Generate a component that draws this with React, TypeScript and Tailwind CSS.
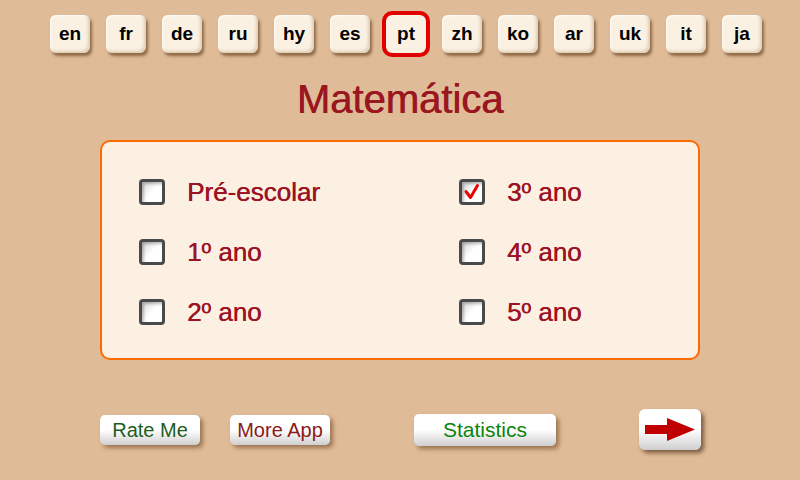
import React from "react";

const langs = ["en", "fr", "de", "ru", "hy", "es", "pt", "zh", "ko", "ar", "uk", "it", "ja"];

const items: { label: string; checked: boolean }[] = [
  { label: "Pré-escolar", checked: false },
  { label: "3º ano", checked: true },
  { label: "1º ano", checked: false },
  { label: "4º ano", checked: false },
  { label: "2º ano", checked: false },
  { label: "5º ano", checked: false },
];

function Checkbox({ checked }: { checked: boolean }) {
  return (
    <div className="w-[26px] h-[26px] rounded-[4px] border-[3px] border-[#4a4a4a] bg-gradient-to-br from-[#d8d8d8] via-white to-white flex items-center justify-center shadow-[inset_2px_2px_3px_rgba(0,0,0,0.25)]">
      {checked && (
        <svg width="18" height="18" viewBox="0 0 18 18">
          <path d="M3 8.5 L7.5 14.5 L14.5 2.5" fill="none" stroke="#ee0000" strokeWidth="3" strokeLinecap="round" strokeLinejoin="round" />
        </svg>
      )}
    </div>
  );
}

export default function App() {
  return (
    <div
      className="w-[800px] h-[480px] bg-[#e0bb97] flex flex-col overflow-hidden"
      style={{ fontFamily: '"Liberation Sans", Arial, sans-serif' }}
    >
      <div className="flex gap-4 pl-[50px] pt-[15px]">
        {langs.map((l) => (
          <div
            key={l}
            className={
              "w-[40px] h-[38px] rounded-[6px] bg-[#fbf1e2] flex items-center justify-center text-[19px] font-bold text-black pt-[1px] " +
              (l === "pt"
                ? "outline-[4px] outline outline-[#e00000]"
                : "shadow-[2px_3px_3px_rgba(110,70,35,0.7),inset_-2px_-2px_3px_rgba(170,140,100,0.35),inset_1px_1px_2px_rgba(255,255,255,0.9)]")
            }
          >
            {l}
          </div>
        ))}
      </div>

      <div className="h-[87px] flex items-center justify-center text-[40px] text-[#9a1620] leading-none pt-[4px] [text-shadow:0.6px_0_0_#9a1620]">
        Matemática
      </div>

      <div className="ml-[100px] w-[600px] h-[220px] rounded-[10px] border-2 border-[#ff6a00] bg-[#fbf0e2] pt-[20px] pl-[37px]">
        <div className="grid grid-cols-[320px_240px] auto-rows-[60px]">
          {items.map((it) => (
            <div key={it.label} className="flex items-center gap-[22px]">
              <Checkbox checked={it.checked} />
              <span className="text-[26px] text-[#9c1324] leading-none [text-shadow:0.4px_0_0_#9c1324]">{it.label}</span>
            </div>
          ))}
        </div>
      </div>

      <div className="flex items-start pl-[100px] mt-[49px]">
        <div className="mt-[6px] w-[100px] h-[30px] rounded-[5px] bg-gradient-to-b from-white via-white to-[#cfcfcf] shadow-[3px_3px_4px_rgba(110,70,35,0.6)] flex items-center justify-center text-[20px] text-[#1d5e1d]">
          Rate Me
        </div>
        <div className="ml-[30px] mt-[6px] w-[100px] h-[30px] rounded-[5px] bg-gradient-to-b from-white via-white to-[#cfcfcf] shadow-[3px_3px_4px_rgba(110,70,35,0.6)] flex items-center justify-center text-[20px] text-[#8b1a1a]">
          More App
        </div>
        <div className="ml-[84px] mt-[5px] w-[142px] h-[32px] rounded-[5px] bg-gradient-to-b from-white via-white to-[#cfcfcf] shadow-[3px_3px_4px_rgba(110,70,35,0.6)] flex items-center justify-center text-[21px] text-[#0b840b]">
          Statistics
        </div>
        <div className="ml-[83px] w-[62px] h-[41px] rounded-[6px] bg-gradient-to-b from-white via-white to-[#cfcfcf] shadow-[3px_3px_4px_rgba(80,50,30,0.7)] flex items-center justify-center">
          <svg width="50" height="23" viewBox="0 0 50 23">
            <path d="M0 7 L22 7 L22 0 L50 11.5 L22 23 L22 16 L0 16 Z" fill="#c00000" />
          </svg>
        </div>
      </div>
    </div>
  );
}
